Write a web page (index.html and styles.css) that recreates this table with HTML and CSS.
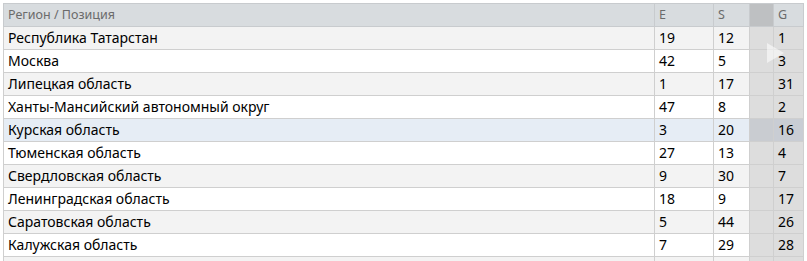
FILE: index.html
```html
<!DOCTYPE html>
<html>
  <head>
    <title>Регионы</title>
    <link rel="stylesheet" href="styles.css">
  </head>
  <body>
    <div class="grid">
      <table class="rank">
        <colgroup>
          <col class="c-name"><col class="c-e"><col class="c-s"><col class="c-gap"><col class="c-g">
        </colgroup>
        <thead>
          <tr><th>Регион / Позиция</th><th>E</th><th>S</th><th class="gap"></th><th>G</th></tr>
        </thead>
        <tbody>
          <tr><td>Республика Татарстан</td><td>19</td><td>12</td><td class="gap"></td><td class="g">1</td></tr>
          <tr><td>Москва</td><td>42</td><td>5</td><td class="gap"></td><td class="g">3</td></tr>
          <tr><td>Липецкая область</td><td>1</td><td>17</td><td class="gap"></td><td class="g">31</td></tr>
          <tr><td>Ханты-Мансийский автономный округ</td><td>47</td><td>8</td><td class="gap"></td><td class="g">2</td></tr>
          <tr class="sel"><td>Курская область</td><td>3</td><td>20</td><td class="gap"></td><td class="g">16</td></tr>
          <tr><td>Тюменская область</td><td>27</td><td>13</td><td class="gap"></td><td class="g">4</td></tr>
          <tr><td>Свердловская область</td><td>9</td><td>30</td><td class="gap"></td><td class="g">7</td></tr>
          <tr><td>Ленинградская область</td><td>18</td><td>9</td><td class="gap"></td><td class="g">17</td></tr>
          <tr><td>Саратовская область</td><td>5</td><td>44</td><td class="gap"></td><td class="g">26</td></tr>
          <tr><td>Калужская область</td><td>7</td><td>29</td><td class="gap"></td><td class="g">28</td></tr>
          <tr><td>&nbsp;</td><td></td><td></td><td class="gap"></td><td class="g"></td></tr>
        </tbody>
      </table>
      <div class="scroll-arrow"></div>
    </div>
  </body>
</html>
```

FILE: styles.css
```css
html,
body {
  margin: 0;
  background: #fff;
  font-family: "Noto Sans", sans-serif;
  font-size: 14px;
  color: #000;
  overflow: hidden;
}
.grid {
  position: relative;
  width: 800px;
  margin: 3px 0 0 3px;
}
.rank {
  border-collapse: collapse;
  table-layout: fixed;
  width: 800px;
}
.c-name { width: 651px; }
.c-e { width: 59px; }
.c-s { width: 36px; }
.c-gap { width: 24px; }
.c-g { width: 30px; }
.rank th,
.rank td {
  height: 22px;
  padding: 0 4px;
  border: 1px solid #cfcfcf;
  text-align: left;
  white-space: nowrap;
  overflow: hidden;
  line-height: 16px;
}
.rank th {
  background: #d8dcdf;
  color: #6b6b6b;
  font-size: 12.5px;
  font-weight: normal;
  border-color: #c8cbce;
}
.rank th.gap { background: #bec0c2; }
.rank tbody tr:nth-child(odd) td { background: #f3f3f3; }
.rank tbody tr:nth-child(even) td { background: #fff; }
.rank tbody td.gap,
.rank tbody td.g { background: #dddddd !important; }
.rank tbody tr.sel td { background: #e6edf5; }
.rank tbody tr.sel td.gap { background: #c9ccd1 !important; }
.rank tbody tr.sel td.g { background: #c9cdd4 !important; }
.scroll-arrow {
  position: absolute;
  left: 764px;
  top: 40px;
  width: 0;
  height: 0;
  border-top: 10px solid transparent;
  border-bottom: 10px solid transparent;
  border-left: 17px solid rgba(255,255,255,.55);
}
```
